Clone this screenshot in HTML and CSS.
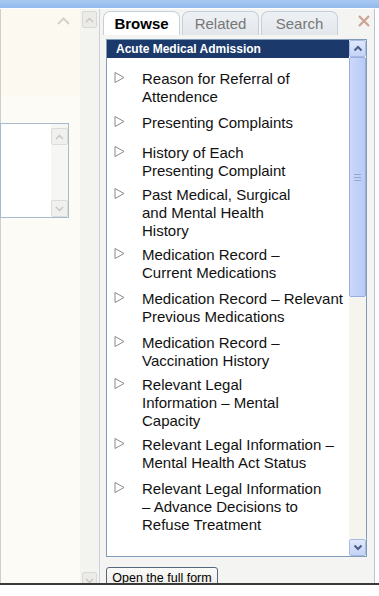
FILE: index.html
```html
<!DOCTYPE html>
<html lang="en">
<head>
  <meta charset="UTF-8">
  <meta name="viewport" content="width=device-width, initial-scale=1.0">
  <title>Acute Medical Admission</title>
  <link rel="stylesheet" href="styles.css">
</head>
<body>
  <div class="topbar"></div>

  <div class="workspace">
    <!-- Notes pane (left) -->
    <div class="notes-pane">
      <div class="notes-head">
        <svg class="collapse" width="13" height="8" viewBox="0 0 13 8"><polyline points="1,7 6.5,1.5 12,7" fill="none" stroke="#d2d2d0" stroke-width="2"/></svg>
      </div>
      <div class="notes-body">
        <div class="textbox">
          <div class="textbox-scroll">
            <span class="mini-btn"><svg width="9" height="6" viewBox="0 0 9 6"><polyline points="1,5 4.5,1.5 8,5" fill="none" stroke="#c4c4c4" stroke-width="1.3"/></svg></span>
            <span class="mini-btn"><svg width="9" height="6" viewBox="0 0 9 6"><polyline points="1,1 4.5,4.5 8,1" fill="none" stroke="#c4c4c4" stroke-width="1.3"/></svg></span>
          </div>
        </div>
      </div>
    </div>

    <div class="pane-scroll">
      <span class="pane-btn"><svg width="9" height="6" viewBox="0 0 9 6"><polyline points="1,5 4.5,1.5 8,5" fill="none" stroke="#c6c6c4" stroke-width="1.4"/></svg></span>
      <span class="pane-btn"><svg width="9" height="6" viewBox="0 0 9 6"><polyline points="1,1 4.5,4.5 8,1" fill="none" stroke="#c6c6c4" stroke-width="1.4"/></svg></span>
    </div>

    <!-- Browser panel (right) -->
    <div class="browser">
      <div class="tabs">
        <span class="tab active">Browse</span>
        <span class="tab">Related</span>
        <span class="tab">Search</span>
        <svg class="close" width="14" height="14" viewBox="0 0 14 14"><path d="M2 2 L12 12 M12 2 L2 12" stroke="#cda292" stroke-width="2.2" fill="none"/></svg>
      </div>

      <div class="list-box">
        <div class="list-main">
          <div class="list-title">Acute Medical Admission</div>
          <ul class="sections">
            <li><svg class="arrow" width="11" height="11" viewBox="0 0 11 11"><polygon points="1,0.5 10,5.5 1,10.5" fill="none" stroke="#8a8a8a"/></svg><span>Reason for Referral of<br>Attendence</span></li>
            <li><svg class="arrow" width="11" height="11" viewBox="0 0 11 11"><polygon points="1,0.5 10,5.5 1,10.5" fill="none" stroke="#8a8a8a"/></svg><span>Presenting Complaints</span></li>
            <li class="spaced"><svg class="arrow" width="11" height="11" viewBox="0 0 11 11"><polygon points="1,0.5 10,5.5 1,10.5" fill="none" stroke="#8a8a8a"/></svg><span>History of Each<br>Presenting Complaint</span></li>
            <li class="tight"><svg class="arrow" width="11" height="11" viewBox="0 0 11 11"><polygon points="1,0.5 10,5.5 1,10.5" fill="none" stroke="#8a8a8a"/></svg><span>Past Medical, Surgical<br>and Mental Health<br>History</span></li>
            <li class="tight"><svg class="arrow" width="11" height="11" viewBox="0 0 11 11"><polygon points="1,0.5 10,5.5 1,10.5" fill="none" stroke="#8a8a8a"/></svg><span>Medication Record –<br>Current Medications</span></li>
            <li><svg class="arrow" width="11" height="11" viewBox="0 0 11 11"><polygon points="1,0.5 10,5.5 1,10.5" fill="none" stroke="#8a8a8a"/></svg><span>Medication Record – Relevant<br>Previous Medications</span></li>
            <li><svg class="arrow" width="11" height="11" viewBox="0 0 11 11"><polygon points="1,0.5 10,5.5 1,10.5" fill="none" stroke="#8a8a8a"/></svg><span>Medication Record –<br>Vaccination History</span></li>
            <li class="tight"><svg class="arrow" width="11" height="11" viewBox="0 0 11 11"><polygon points="1,0.5 10,5.5 1,10.5" fill="none" stroke="#8a8a8a"/></svg><span>Relevant Legal<br>Information – Mental<br>Capacity</span></li>
            <li class="tight"><svg class="arrow" width="11" height="11" viewBox="0 0 11 11"><polygon points="1,0.5 10,5.5 1,10.5" fill="none" stroke="#8a8a8a"/></svg><span>Relevant Legal Information –<br>Mental Health Act Status</span></li>
            <li><svg class="arrow" width="11" height="11" viewBox="0 0 11 11"><polygon points="1,0.5 10,5.5 1,10.5" fill="none" stroke="#8a8a8a"/></svg><span>Relevant Legal Information<br>– Advance Decisions to<br>Refuse Treatment</span></li>
          </ul>
        </div>
        <div class="vscroll">
          <span class="vs-btn"><svg width="10" height="7" viewBox="0 0 10 7"><polyline points="1.5,5.5 5,2 8.5,5.5" fill="none" stroke="#4a5d86" stroke-width="2"/></svg></span>
          <span class="vs-thumb"><span class="grip"></span></span>
          <span class="vs-track"></span>
          <span class="vs-btn"><svg width="10" height="7" viewBox="0 0 10 7"><polyline points="1.5,1.5 5,5 8.5,1.5" fill="none" stroke="#4a5d86" stroke-width="2"/></svg></span>
        </div>
      </div>

      <button class="open-form">Open the full form</button>
    </div>
  </div>
</body>
</html>
```

FILE: styles.css
```css
body {
  margin: 0;
  font-family: "Liberation Sans", Arial, sans-serif;
  background: #fff;
}
.topbar {
  height: 8px;
  background: linear-gradient(#a8c9f2, #93baec);
  border-bottom: 1px solid #fff;
}
.workspace {
  display: flex;
  height: 574px;
  overflow: hidden;
  border-bottom: 2px solid #3a3a3a;
}

/* Notes pane */
.notes-pane {
  width: 80px;
  display: flex;
  flex-direction: column;
  border-left: 1px solid #cfcfcf;
  box-sizing: border-box;
}
.notes-head {
  height: 86px;
  background: #fcf9f0;
  padding: 8px 0 0 56px;
  box-sizing: border-box;
}
.collapse {
  display: block;
}
.notes-body {
  flex: 1;
  background: #fdfbf6;
  padding-top: 28px;
}
.textbox {
  width: 69px;
  height: 95px;
  margin-left: -1px;
  box-sizing: border-box;
  border: 1px solid #a6bad0;
  background: #fff;
  display: flex;
  justify-content: flex-end;
}
.textbox-scroll {
  width: 17px;
  background: #f6f6f4;
  display: flex;
  flex-direction: column;
  justify-content: space-between;
  padding: 4px 0 0;
}
.mini-btn {
  height: 15px;
  display: flex;
  align-items: center;
  justify-content: center;
  background: #f0f0ee;
  border: 1px solid #dcdcda;
  border-radius: 2px;
}

/* Outer pane scrollbar */
.pane-scroll {
  width: 20px;
  background: #f3f3f0;
  border-right: 1px solid #cdd2d9;
  display: flex;
  flex-direction: column;
  justify-content: space-between;
  padding: 2px 2px 0;
  box-sizing: border-box;
}
.pane-btn {
  height: 15px;
  display: flex;
  align-items: center;
  justify-content: center;
  background: #ecebe7;
  border: 1px solid #d8d8d4;
  border-radius: 2px;
}
.pane-btn:last-child {
  margin-bottom: -6px;
}

/* Browser panel */
.browser {
  width: 275px;
  background: #f4f4f2;
  border-right: 1px solid #b9c4d3;
  box-sizing: border-box;
}
.tabs {
  display: flex;
  align-items: flex-end;
  gap: 2px;
  padding: 1px 0 0 3px;
  height: 25px;
}
.tab {
  width: 77px;
  height: 24px;
  box-sizing: border-box;
  border: 1px solid #c6ced8;
  border-bottom: none;
  border-radius: 7px 7px 0 0;
  background: linear-gradient(#eef1f4, #e2e7ec);
  color: #777;
  font-size: 15px;
  line-height: 23px;
  text-align: center;
}
.tab.active {
  background: #fff;
  color: #000;
  font-weight: bold;
}
.close {
  margin: 0 3px 7px auto;
}
.list-box {
  display: flex;
  width: 261px;
  height: 518px;
  margin: 4px 0 0 6px;
  box-sizing: border-box;
  border: 1px solid #7f9db9;
  background: #fff;
}
.list-main {
  flex: 1;
}
.list-title {
  height: 18px;
  background: #1b3a6b;
  color: #fff;
  font-size: 12px;
  font-weight: bold;
  line-height: 18px;
  padding-left: 9px;
}
.sections {
  list-style: none;
  margin: 0;
  padding: 12px 0 0 7px;
}
.sections li {
  display: flex;
  align-items: flex-start;
  font-size: 15px;
  line-height: 18px;
  color: #111;
  margin-top: 8px;
}
.sections li:first-child {
  margin-top: 0;
}
.sections li.spaced {
  margin-top: 12px;
}
.sections li.tight {
  margin-top: 6px;
}
.arrow {
  flex: none;
  margin: 2px 17px 0 0;
}
.vscroll {
  width: 17px;
  display: flex;
  flex-direction: column;
}
.vs-btn {
  height: 17px;
  box-sizing: border-box;
  display: flex;
  align-items: center;
  justify-content: center;
  background: linear-gradient(#e0e8fb, #c4d3f6);
  border: 1px solid #a8bae4;
  border-radius: 2px;
}
.vs-thumb {
  height: 240px;
  box-sizing: border-box;
  display: flex;
  align-items: center;
  justify-content: center;
  background: linear-gradient(90deg, #ccd8f9, #b8caf5);
  border: 1px solid #98aee0;
  border-radius: 2px;
}
.grip {
  width: 7px;
  height: 5px;
  border-top: 1px solid #93a8d8;
  border-bottom: 1px solid #93a8d8;
  position: relative;
}
.grip::after {
  content: "";
  position: absolute;
  left: 0;
  right: 0;
  top: 2px;
  border-top: 1px solid #93a8d8;
}
.vs-track {
  flex: 1;
  background: #f6f4ee;
}
.open-form {
  display: block;
  margin: 10px 0 0 6px;
  width: 112px;
  height: 22px;
  padding: 0;
  font-family: "Liberation Sans", Arial, sans-serif;
  font-size: 12.5px;
  color: #000;
  background: linear-gradient(#fafaf8, #ecebe6);
  border: 1px solid #56667c;
  border-radius: 3px;
  text-align: center;
  line-height: 18px;
}
```
